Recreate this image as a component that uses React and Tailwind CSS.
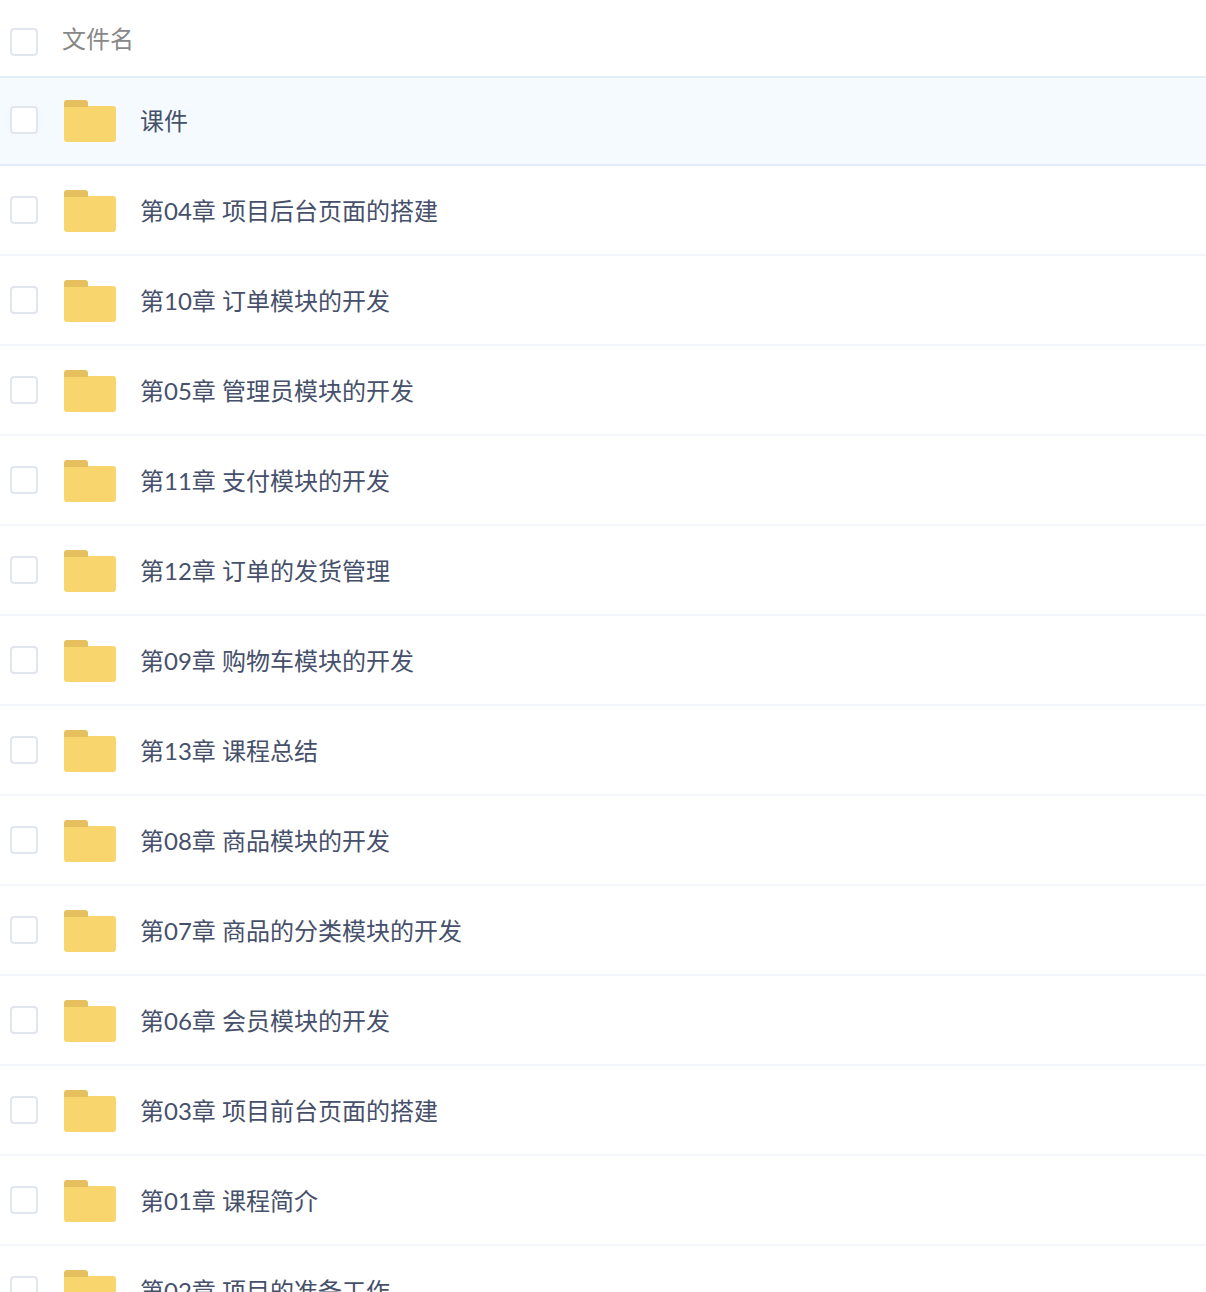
import React from 'react';

const folders = [
  '课件',
  '第04章 项目后台页面的搭建',
  '第10章 订单模块的开发',
  '第05章 管理员模块的开发',
  '第11章 支付模块的开发',
  '第12章 订单的发货管理',
  '第09章 购物车模块的开发',
  '第13章 课程总结',
  '第08章 商品模块的开发',
  '第07章 商品的分类模块的开发',
  '第06章 会员模块的开发',
  '第03章 项目前台页面的搭建',
  '第01章 课程简介',
  '第02章 项目的准备工作',
];

const FolderIcon = () => (
  <svg width="52" height="42" viewBox="0 0 52 42" className="block shrink-0">
    <path d="M0 3a3 3 0 0 1 3-3h18a3 3 0 0 1 3 3v4H0z" fill="#e6c05f" />
    <path d="M0 7h24V6h25a3 3 0 0 1 3 3v30a3 3 0 0 1-3 3H3a3 3 0 0 1-3-3z" fill="#f9d56e" />
  </svg>
);

const Checkbox = () => (
  <div className="w-7 h-7 rounded-[4px] border-2 border-[#e1e6ee] bg-white shrink-0" />
);

const App = () => {
  return (
    <div className="w-[1206px] h-[1292px] overflow-hidden bg-white font-['Lato','Noto_Sans_CJK_SC',sans-serif]">
      <div className="h-[78px] flex items-center border-b-2 border-[#e3eefb] pl-[10px] pt-2">
        <Checkbox />
        <span className="ml-6 text-2xl leading-8 text-[#888888] -mt-[6px]">文件名</span>
      </div>
      {folders.map((name, index) => (
        <div
          key={name}
          className={`flex items-center pl-[10px] border-b-2 ${
            index === 0 ? 'h-[88px] bg-[#f5faff] border-[#e3eefb]' : 'h-[90px] pt-[2px] bg-white border-[#f3f6fb]'
          }`}
        >
          <div className="-mt-[2px]">
            <Checkbox />
          </div>
          <div className="ml-[26px]">
            <FolderIcon />
          </div>
          <span className="ml-6 text-2xl leading-8 text-[#46506a] whitespace-pre">{name}</span>
        </div>
      ))}
    </div>
  );
};

export default App;
